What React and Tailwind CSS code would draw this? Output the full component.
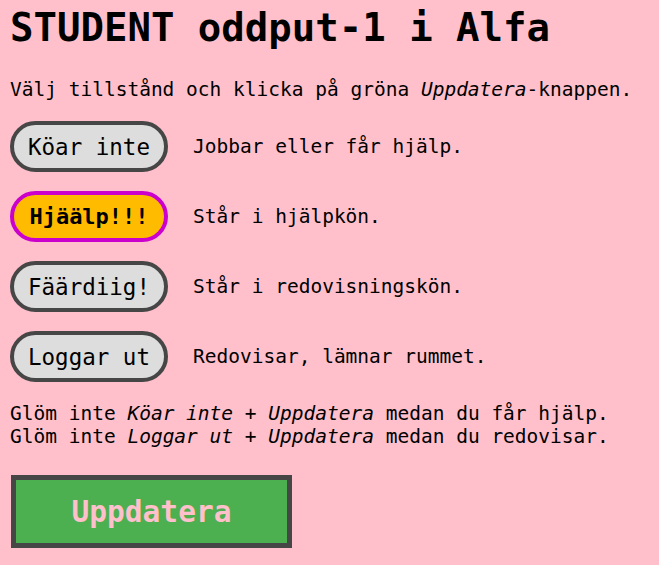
import React, { useState } from 'react';

const STATES = [
    { key: 'idle', label: 'Köar inte', text: 'Jobbar eller får hjälp.' },
    { key: 'help', label: 'Hjäälp!!!', text: 'Står i hjälpkön.' },
    { key: 'done', label: 'Fäärdiig!', text: 'Står i redovisningskön.' },
    { key: 'out', label: 'Loggar ut', text: 'Redovisar, lämnar rummet.' },
];

const StateRow = ({ item, selected, onSelect }) => (
    <div className="flex items-center gap-[25px]">
        <button
            onClick={() => onSelect(item.key)}
            className={
                selected
                    ? 'w-[158px] h-[51px] rounded-full border-4 border-[#cc00cc] bg-[#ffbb00] text-[22px] font-bold text-black'
                    : 'w-[158px] h-[51px] rounded-full border-4 border-[#464646] bg-[#dddddd] text-[22.5px] text-black'
            }
        >
            {item.label}
        </button>
        <span>{item.text}</span>
    </div>
);

export default function App() {
    const [current, setCurrent] = useState('help');

    return (
        <div
            className="min-h-[565px] bg-[#ffc0cb] pl-[10px] pt-[5px] text-[19.5px] leading-[22px] text-black"
            style={{ fontFamily: '"DejaVu Sans Mono", "Liberation Mono", monospace' }}
        >
            <h1 className="text-[39px] leading-[45px] font-bold">STUDENT oddput-1 i Alfa</h1>

            <p className="mt-[29px]">
                Välj tillstånd och klicka på gröna <i>Uppdatera</i>-knappen.
            </p>

            <div className="mt-[20px] flex flex-col gap-[19px]">
                {STATES.map((s) => (
                    <StateRow key={s.key} item={s} selected={current === s.key} onSelect={setCurrent} />
                ))}
            </div>

            <div className="mt-[20px] leading-[23px]">
                <div>Glöm inte <i>Köar inte</i> + <i>Uppdatera</i> medan du får hjälp.</div>
                <div>Glöm inte <i>Loggar ut</i> + <i>Uppdatera</i> medan du redovisar.</div>
            </div>

            <button className="mt-[27px] ml-px w-[281px] h-[73px] border-[5px] border-[#464646] bg-[#4caf50] text-[29.5px] font-bold text-[#ffc0cb]">
                Uppdatera
            </button>
        </div>
    );
}
